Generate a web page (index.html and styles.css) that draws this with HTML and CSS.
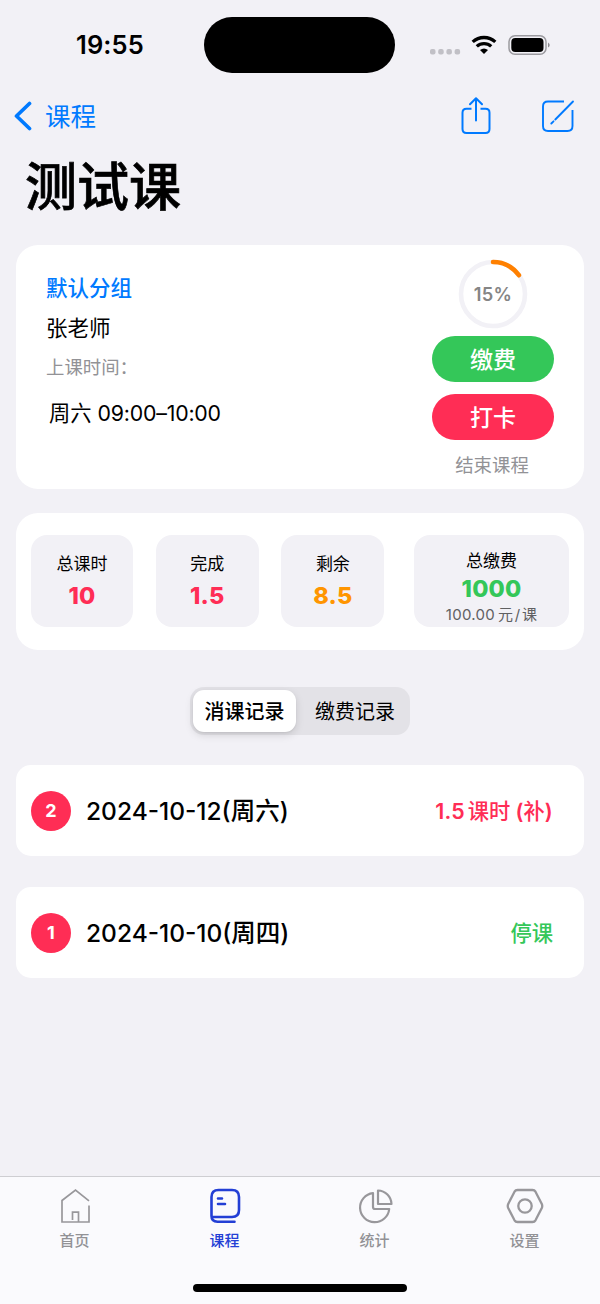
FILE: index.html
```html
<!DOCTYPE html>
<html lang="zh-CN">
<head>
<meta charset="utf-8">
<title>测试课</title>
<link rel="stylesheet" href="styles.css">
</head>
<body>
<div class="screen">
  <header class="status">
    <div class="time">19:55</div>
    <div class="island"></div>
    <div class="signals">
      <svg width="122" height="24" viewBox="0 0 122 24">
        <g fill="#c1c0c6"><rect x="0" y="14" width="5.500" height="5.500" rx="2"/><rect x="8.200" y="14" width="5.500" height="5.500" rx="2"/><rect x="16.400" y="14" width="5.500" height="5.500" rx="2"/><rect x="24.600" y="14" width="5.500" height="5.500" rx="2"/></g>
        <g fill="none" stroke="#000" stroke-width="3.300"><path d="M42.700 6.900a16.700 16.700 0 0 1 22.600 0"/><path d="M46.800 11.400a10.600 10.600 0 0 1 14.400 0"/></g>
        <path d="M50 15a6.500 6.500 0 0 1 8 0L54 19.100z"/>
        <rect x="79" y="0.800" width="37" height="18.400" rx="6" fill="none" stroke="#9b9a9f" stroke-width="1.500"/>
        <rect x="81.300" y="3" width="32.200" height="14" rx="4"/>
        <path d="M118 7.400q3.400 2.600 0 5.200z" fill="#8b8a8f"/>
      </svg>
    </div>
  </header>
  <nav class="nav">
    <svg width="18" height="30" viewBox="0 0 18 30" fill="none" stroke="#007aff" stroke-width="3.700" stroke-linecap="round" stroke-linejoin="round"><path d="M15.500 2.500L2.500 15l13 12.500"/></svg>
    <span class="back">课程</span>
    <svg class="share" width="30" height="38" viewBox="0 0 30 38" fill="none" stroke="#007aff" stroke-width="2" stroke-linecap="round" stroke-linejoin="round"><path d="M10.500 11.700H5.500Q1.500 11.700 1.500 15.700V32Q1.500 36 5.500 36H24.500Q28.500 36 28.500 32V15.700Q28.500 11.700 24.500 11.700H19.500" stroke-linecap="butt"/><path d="M15 23.500V2M9 7.200L15 1.200l6 6"/></svg>
    <svg class="edit" width="34" height="34" viewBox="0 0 34 34" fill="none" stroke="#007aff" stroke-width="1.900"><path d="M23 2.500H7Q2 2.500 2 7.500V27Q2 32 7 32H26.500Q31.500 32 31.500 27V11"/><path d="M32 2.500L14.300 20.500M12.500 22.300L10.300 24.500" stroke-linecap="round"/></svg>
  </nav>
  <h1 class="title">测试课</h1>

  <section class="card course">
    <div class="info">
      <div class="group">默认分组</div>
      <div class="teacher">张老师</div>
      <div class="label">上课时间：</div>
      <div class="schedule">周六 <span class="hours">09:00–10:00</span></div>
    </div>
    <div class="actions">
      <div class="ring">
        <svg width="70" height="70" viewBox="0 0 70 70" fill="none" stroke-width="4.600"><circle cx="35" cy="35" r="32" stroke="#f2f1f6"/><path d="M35 3A32 32 0 0 1 60.900 16.200" stroke="#ff8000" stroke-linecap="round"/></svg>
        <span class="percent">15%</span>
      </div>
      <div class="pill pay">缴费</div>
      <div class="pill punch">打卡</div>
      <div class="finish">结束课程</div>
    </div>
  </section>

  <section class="card stats">
    <div class="stat"><span class="name">总课时</span><b class="num red">10</b></div>
    <div class="stat"><span class="name">完成</span><b class="num red">1.5</b></div>
    <div class="stat"><span class="name">剩余</span><b class="num orange">8.5</b></div>
    <div class="stat wide"><span class="name">总缴费</span><b class="num green">1000</b><span class="rate">100.00<i class="thin"></i>元<i class="hair"></i>/<i class="hair"></i>课</span></div>
  </section>

  <div class="segments"><div class="segment on">消课记录</div><div class="segment">缴费记录</div></div>

  <section class="card record"><span class="badge">2</span><span class="date">2024-10-12(周六)</span><span class="result red"><b>1.5</b><i class="thin"></i>课时<i class="thin wide-gap"></i><b>(</b>补<b>)</b></span></section>
  <section class="card record"><span class="badge">1</span><span class="date">2024-10-10(周四)</span><span class="result green">停课</span></section>

  <footer class="tabs">
    <div class="tab"><svg width="40" height="38" viewBox="0 0 40 38" fill="none" stroke="#98979b" stroke-width="1.700"><path d="M34 17.500V34H7V12.500L20.500 2 34 12.800M17.500 32V24.200H23.500V34"/></svg><span>首页</span></div>
    <div class="tab active"><svg width="40" height="38" viewBox="0 0 40 38" fill="none" stroke="#233fd5" stroke-width="2.600" stroke-linecap="round"><path d="M6.500 28V9Q6.500 2 13.500 2H27Q34 2 34 9V22Q34 29 27 29H9.500Q6.500 29 6.500 28Q6.500 33.700 12.500 33.700H29.500M13 10.500H17M13 16H20"/></svg><span>课程</span></div>
    <div class="tab"><svg width="40" height="38" viewBox="0 0 40 38" fill="none" stroke="#98979b" stroke-width="2.200" stroke-linejoin="round"><path d="M18 5.100A14.600 14.600 0 1 0 34.200 21H20Q18 21 18 19z"/><path d="M23 2.500V16H36.500A14 14 0 0 0 23 2.500z"/></svg><span>统计</span></div>
    <div class="tab"><svg width="40" height="38" viewBox="0 0 40 38" fill="none" stroke="#98979b" stroke-width="2.300"><path d="M12.500 2H27.500Q29.500 2 30.500 3.700L36.800 16Q37.700 18 36.800 20L30.500 32.300Q29.500 34 27.500 34H12.500Q10.500 34 9.500 32.300L3.200 20Q2.300 18 3.200 16L9.500 3.700Q10.500 2 12.500 2z"/><circle cx="20" cy="18" r="6.700"/></svg><span>设置</span></div>
    <div class="home-indicator"></div>
  </footer>
</div>
</body>
</html>
```
FILE: styles.css
```css
* { box-sizing: border-box; }
body { margin: 0; background: #f2f1f6; color: #000; font-family: Inter, "Noto Sans CJK SC", sans-serif; white-space: nowrap; }
.screen { width: 600px; height: 1304px; display: flex; flex-direction: column; overflow: hidden; }
svg { display: block; flex: none; }

.status { height: 90px; flex: none; display: grid; grid-template-columns: 204.400px 191px 204.600px; align-items: start; }
.time { padding: 30.400px 0 0 76px; font-size: 25.500px; line-height: 30px; font-weight: 600; letter-spacing: 0.1px; }
.island { margin-top: 17.400px; height: 56px; border-radius: 28px; background: #000; }
.signals { padding: 35px 0 0 34.600px; }

.nav { height: 52px; flex: none; display: flex; align-items: center; padding: 0 25px 0 14px; }
.back { margin: 2px 0 0 13px; color: #007aff; font-size: 25.500px; line-height: 36px; }
.share { margin: 0 50px 0 auto; }
.title { margin: 0; height: 103px; flex: none; padding: 8px 0 0 25px; font-size: 52px; line-height: 76px; font-weight: 500; -webkit-text-stroke: 0.7px #000; }

.card { flex: none; margin: 0 16px; background: #fff; border-radius: 22px; }
.course { height: 244px; display: flex; justify-content: space-between; }
.info { padding: 26px 0 0 30px; }
.group { color: #007aff; font-size: 21.500px; line-height: 34px; font-weight: 500; }
.teacher { margin-top: 6px; font-size: 21.500px; line-height: 34px; }
.label { margin-top: 7px; color: #929296; font-size: 18.400px; line-height: 30px; }
.schedule { margin: 14px 0 0 3px; font-size: 21.300px; line-height: 34px; }
.hours { letter-spacing: -0.2px; }
.actions { width: 122px; margin-right: 30px; display: flex; flex-direction: column; align-items: center; padding-top: 14px; }
.ring { display: grid; place-items: center; height: 70px; }
.ring > * { grid-area: 1 / 1; }
.percent { color: #858585; font-size: 18.300px; font-weight: 600; letter-spacing: 0.3px; }
.pill { width: 122px; height: 46px; border-radius: 23px; color: #fff; font-size: 23px; line-height: 48px; font-weight: 500; text-align: center; }
.pay { margin-top: 7px; background: #34c759; }
.punch { margin-top: 12px; background: #ff2d55; }
.finish { margin: 10px 2px 0 0; color: #929296; font-size: 18.400px; line-height: 30px; }

.stats { height: 137px; margin-top: 24px; padding: 22px 15px; display: grid; grid-template-columns: 102px 103px 103px 155px; column-gap: 22.700px; }
.stat { height: 92px; border-radius: 16px; background: #f2f1f6; display: flex; flex-direction: column; align-items: center; padding-top: 15px; }
.stat.wide { margin-left: 7px; width: 155px; padding-top: 12px; }
.name { font-size: 17px; line-height: 28px; }
.num { margin-top: 4px; font-size: 23.500px; line-height: 28px; font-weight: 800; letter-spacing: 0.2px; }
.wide .num { margin-top: 0; }
.rate { margin-top: 1px; color: #606062; font-size: 15px; line-height: 22px; letter-spacing: 0.3px; }
.thin { display: inline-block; width: 3px; }
.hair { display: inline-block; width: 1.500px; }
.wide-gap { width: 5px; }
.red { color: #ff2d55; }
.orange { color: #ff9500; }
.green { color: #34c759; }

.segments { flex: none; align-self: center; width: 220px; height: 48px; margin: 37px 0 30px; padding: 3px; border-radius: 14px; background: #e3e2e7; display: grid; grid-template-columns: 103px 104px; column-gap: 7px; }
.segment { height: 42px; text-align: center; font-size: 20px; line-height: 44px; border-radius: 11px; }
.on { background: #fff; font-weight: 500; box-shadow: 0 3px 9px rgba(0,0,0,.13), 0 1px 2px rgba(0,0,0,.06); }

.record { height: 91px; margin-bottom: 31px; border-radius: 15px; padding: 0 31px 0 15px; display: flex; align-items: center; }
.badge { width: 40px; height: 40px; border-radius: 50%; background: #ff2d55; color: #fff; font-size: 18px; line-height: 40px; font-weight: 700; text-align: center; }
.date { margin-left: 15px; font-size: 24.500px; line-height: 36px; font-weight: 500; }
.result { margin-left: auto; font-size: 21.300px; line-height: 32px; font-weight: 500; }
.result b { font-weight: 600; letter-spacing: 0.2px; }

.tabs { margin-top: auto; height: 128px; flex: none; border-top: 1px solid #ceced2; background: #fafafd; display: grid; grid-template-columns: repeat(4, 150px); grid-template-rows: 107px 8px; }
.tab { display: flex; flex-direction: column; align-items: center; padding-top: 11px; color: #929296; font-size: 15px; line-height: 24px; font-weight: 500; }
.tab span { margin: 3px 1px 0 0; }
.active { color: #233fd5; }
.home-indicator { grid-column: 1 / -1; justify-self: center; width: 214px; height: 8px; border-radius: 4px; background: #000; }
```
